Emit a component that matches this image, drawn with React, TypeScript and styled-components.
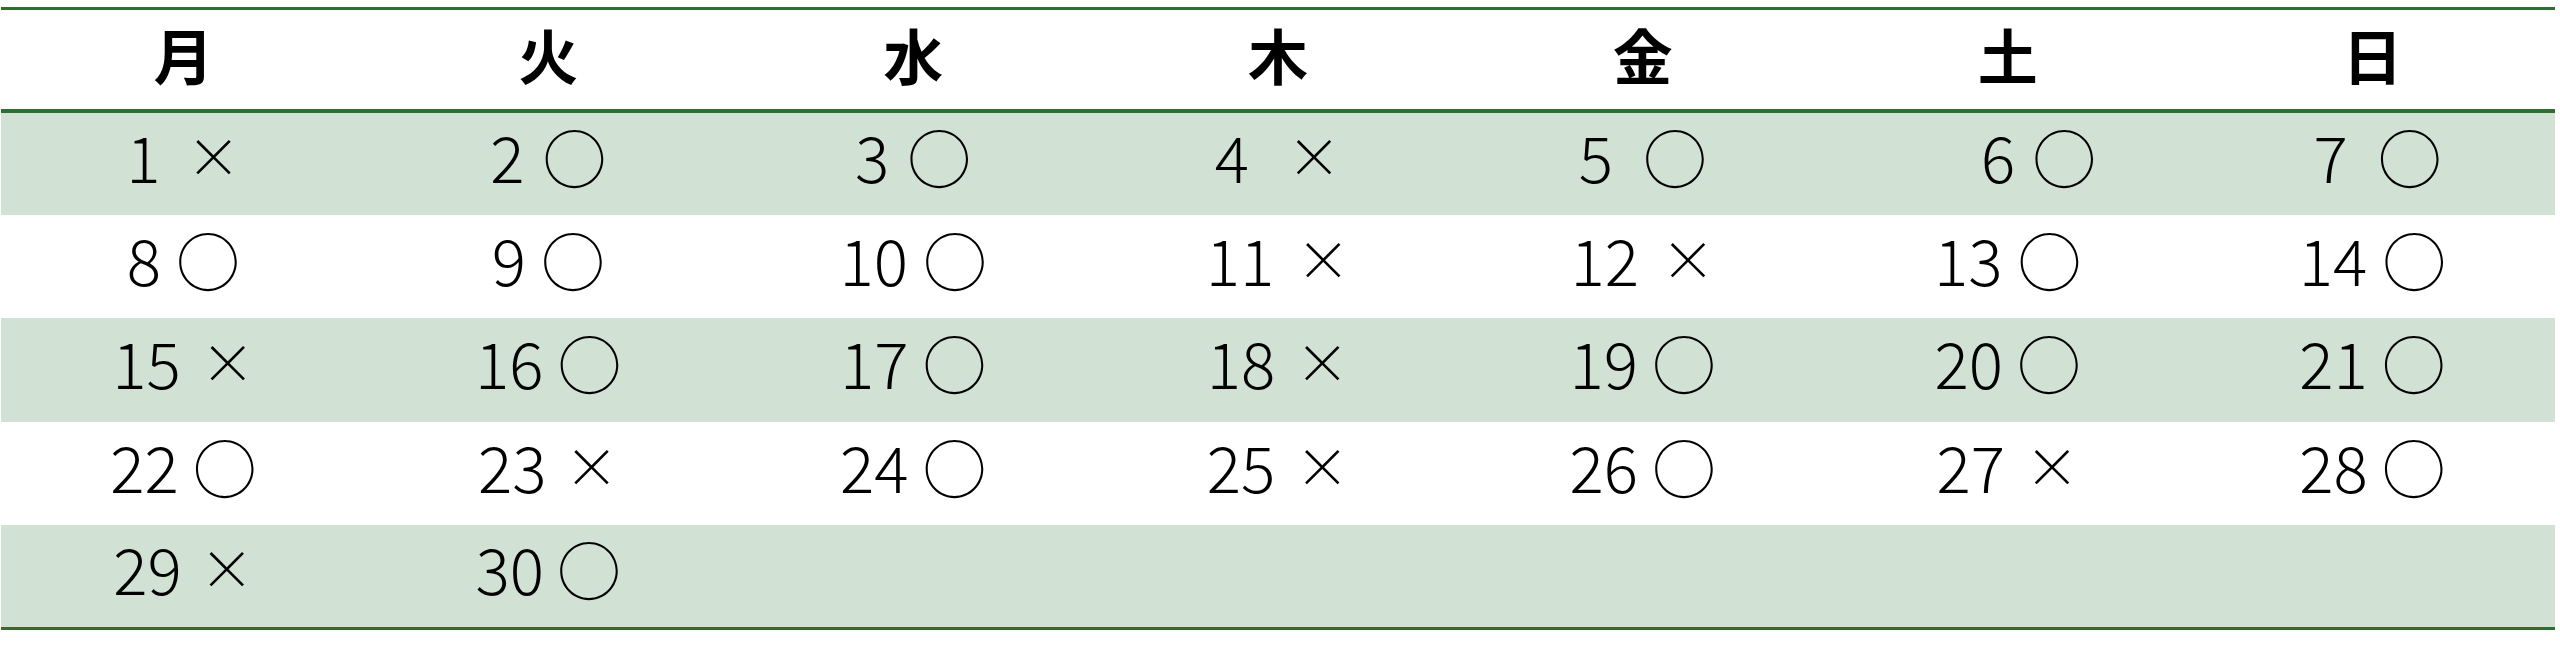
import styled, { createGlobalStyle } from "styled-components"

const GlobalStyle = createGlobalStyle`
    html, body {
        margin: 0;
        padding: 0;
        background: #ffffff;
    }
    body {
        font-family: "Noto Sans CJK JP", "Noto Sans", sans-serif;
        color: #111;
    }
`

const Page = styled.div`
    padding: 7px 6px 0 1px;
`

const Calendar = styled.div`
    width: 2554px;
    border-top: 3px solid #2f6e32;
    border-bottom: 3px solid #2f6e32;
`

const HeadRow = styled.div`
    display: grid;
    grid-template-columns: repeat(7, 1fr);
    height: 99px;
    border-bottom: 4px solid #2f6e32;
`

const HeadCell = styled.div`
    display: flex;
    align-items: center;
    justify-content: center;
    padding-bottom: 12px;
    font-size: 60px;
    font-weight: 700;
    color: #000;
`

const Row = styled.div<{ $shade: boolean; $h: number }>`
    display: grid;
    grid-template-columns: repeat(7, 1fr);
    height: ${p => p.$h}px;
    background: ${p => (p.$shade ? "#d1e2d5" : "#ffffff")};
`

const Cell = styled.div<{ $lead: number }>`
    display: flex;
    align-items: center;
    justify-content: center;
    padding-bottom: 18px;
    padding-left: ${p => p.$lead}px;
    line-height: 1;
    color: #000;
`

const Num = styled.span`
    font-size: 64px;
    font-weight: 300;
`

const Mark = styled.span<{ $cross: boolean; $gap: number }>`
    margin-left: ${p => p.$gap}px;
    font-size: ${p => (p.$cross ? 54 : 64)}px;
    font-weight: 300;
`

type Day = [number, "○" | "×", number, number?]

const days: string[] = ["月", "火", "水", "木", "金", "土", "日"]

// [日付, 記号, 間隔(px), 先頭の余白(px)]
const weeks: (Day | null)[][] = [
    [[1, "×", 26], [2, "○", 18], [3, "○", 18], [4, "×", 38], [5, "○", 30], [6, "○", 17, 62], [7, "○", 30, 10]],
    [[8, "○", 15], [9, "○", 15], [10, "○", 15], [11, "×", 22], [12, "×", 22], [13, "○", 15], [14, "○", 15]],
    [[15, "×", 20], [16, "○", 14], [17, "○", 14], [18, "×", 20], [19, "○", 14], [20, "○", 14], [21, "○", 14]],
    [[22, "○", 14], [23, "×", 18], [24, "○", 14], [25, "×", 20], [26, "○", 14], [27, "×", 20], [28, "○", 14]],
    [[29, "×", 18], [30, "○", 13], null, null, null, null, null],
]

const heights: number[] = [102, 103, 104, 103, 102]

export default function App() {
    return (
        <>
            <GlobalStyle />
            <Page>
                <Calendar>
                    <HeadRow>
                        {days.map(d => <HeadCell key={d}>{d}</HeadCell>)}
                    </HeadRow>
                    {weeks.map((w, i) => (
                        <Row key={i} $shade={i % 2 === 0} $h={heights[i]}>
                            {w.map((c, j) =>
                                c ? (
                                    <Cell key={j} $lead={c[3] ?? 0}>
                                        <Num>{c[0]}</Num>
                                        <Mark $cross={c[1] === "×"} $gap={c[2]}>{c[1]}</Mark>
                                    </Cell>
                                ) : (
                                    <Cell key={j} $lead={0} />
                                )
                            )}
                        </Row>
                    ))}
                </Calendar>
            </Page>
        </>
    )
}
